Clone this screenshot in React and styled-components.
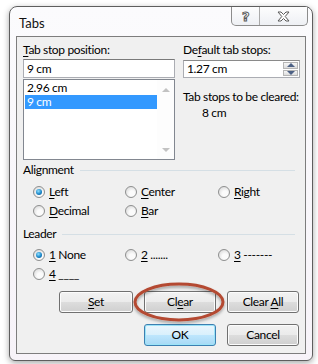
import React from "react";
import styled, { createGlobalStyle } from "styled-components";

const GlobalStyle = createGlobalStyle`
  body {
    margin: 0;
    background: #ffffff;
    font-family: "Lato", "Noto Sans", sans-serif;
    font-size: 12px;
    letter-spacing: -0.35px;
    color: #000;
  }
`;

const Page = styled.div`
  width: 318px;
  height: 364px;
  padding: 6px 0 0 9px;
  box-sizing: border-box;
`;

const Window = styled.div`
  position: relative;
  width: 304px;
  height: 355px;
  box-sizing: border-box;
  border: 1px solid #5e5e5e;
  border-radius: 8px 8px 6px 6px;
  background: linear-gradient(#fbfbfd, #f7f3f9);
  box-shadow: 0 2px 6px rgba(0, 0, 0, 0.35);
  padding: 0 6px 6px 6px;
  display: flex;
  flex-direction: column;
`;

const TitleBar = styled.div`
  height: 29px;
  display: flex;
  align-items: flex-start;
`;

const Title = styled.div`
  font-size: 13px;
  letter-spacing: 0;
  padding: 8px 0 0 3px;
  color: #111;
`;

const CaptionButtons = styled.div`
  margin-left: auto;
  margin-right: -2px;
  display: flex;
  height: 18px;
  border: 1px solid #8c8c8c;
  border-top: none;
  border-radius: 0 0 5px 5px;
  background: linear-gradient(#fdfdfd, #eef0f4);
`;

const CaptionButton = styled.div`
  width: ${(p) => p.$w}px;
  display: flex;
  align-items: center;
  justify-content: center;
  border-left: ${(p) => (p.$divider ? "1px solid #a9a9a9" : "none")};
  font-family: "DejaVu Sans", sans-serif;
  font-size: 13px;
  font-weight: bold;
  color: #ffffff;
  -webkit-text-stroke: 1px #5a5a5a;
`;

const Panel = styled.div`
  position: relative;
  flex: 1;
  border: 1px solid #7d7d7d;
  background: #f0f0f0;
  padding: 5px 5px 0 6px;
  display: flex;
  flex-direction: column;
`;

const TopGrid = styled.div`
  display: grid;
  grid-template-columns: 152px 117px;
  column-gap: 8px;
`;

const Column = styled.div`
  display: flex;
  flex-direction: column;
`;

const Label = styled.div`
  height: 17px;
  line-height: 16px;
  margin-top: ${(p) => p.$mt || 0}px;
  padding-left: ${(p) => p.$indent || 0}px;
  white-space: nowrap;
`;

const Key = styled.span`
  text-decoration: underline;
  text-underline-offset: 2px;
`;

const TextBox = styled.div`
  height: 19px;
  box-sizing: border-box;
  border: 1px solid #abadb3;
  border-top-color: #7a7a7a;
  background: #fff;
  padding-left: 3px;
  line-height: 17px;
`;

const ListBox = styled.div`
  margin-top: 1px;
  height: 81px;
  box-sizing: border-box;
  border: 1px solid #828790;
  background: #fff;
  display: flex;
`;

const ListItems = styled.div`
  flex: 1;
  padding: 1px 0 0 1px;
`;

const ListItem = styled.div`
  height: 14px;
  line-height: 14px;
  padding-left: 2px;
  background: ${(p) => (p.$selected ? "#3399ff" : "transparent")};
  color: ${(p) => (p.$selected ? "#fff" : "#000")};
`;

const ScrollTrack = styled.div`
  width: 17px;
  display: flex;
  flex-direction: column;
  justify-content: space-between;
  align-items: center;
  padding: 8px 0 7px;
  background: #fdfdfd;
`;

const Arrow = styled.div`
  width: 0;
  height: 0;
  border-left: 4px solid transparent;
  border-right: 4px solid transparent;
  ${(p) =>
    p.$up
      ? `border-bottom: 4px solid ${p.$color || "#c2c2c2"};`
      : `border-top: 4px solid ${p.$color || "#c2c2c2"};`}
`;

const Spinner = styled.div`
  margin-top: 1px;
  height: 18px;
  box-sizing: border-box;
  border: 1px solid #abadb3;
  border-top-color: #8a8a8a;
  background: #fff;
  display: flex;
`;

const SpinText = styled.div`
  flex: 1;
  padding-left: 3px;
  line-height: 16px;
`;

const SpinButtons = styled.div`
  width: 15px;
  display: flex;
  flex-direction: column;
  gap: 1px;
  padding: 1px;
`;

const SpinButton = styled.div`
  flex: 1;
  border: 1px solid #b5b5b5;
  background: linear-gradient(#f6f6f6, #dcdcdc);
  display: flex;
  align-items: center;
  justify-content: center;
`;

const SectionHeader = styled.div`
  margin-top: ${(p) => p.$mt}px;
  height: 16px;
  display: flex;
  align-items: center;
  line-height: 16px;
`;

const SectionLine = styled.div`
  flex: 1;
  height: 1px;
  margin: 1px 5px 0 6px;
  background: #d5dfe5;
`;

const RadioRow = styled.div`
  margin-top: ${(p) => p.$mt || 0}px;
  height: 19px;
  padding-left: 10px;
  display: grid;
  grid-template-columns: 92px 93px 1fr;
  align-items: center;
`;

const RadioOption = styled.div`
  display: flex;
  align-items: center;
  gap: 4px;
  white-space: nowrap;
`;

const RadioCircle = styled.div`
  width: 12px;
  height: 12px;
  box-sizing: border-box;
  border-radius: 50%;
  border: 1px solid #8e8f8f;
  background: radial-gradient(circle at 60% 65%, #fbfbfb 30%, #d0d0d0 100%);
  display: flex;
  align-items: center;
  justify-content: center;
  &::after {
    content: "";
    display: ${(p) => (p.$checked ? "block" : "none")};
    width: 6px;
    height: 6px;
    border-radius: 50%;
    background: radial-gradient(circle at 40% 35%, #8fe0ff 0%, #1b87c9 55%, #0a4f86 100%);
  }
`;

const ButtonRow = styled.div`
  margin-top: ${(p) => p.$mt}px;
  display: flex;
  justify-content: flex-end;
  gap: 11px;
  padding-right: 1px;
`;

const Button = styled.div`
  width: ${(p) => p.$w}px;
  height: 22px;
  box-sizing: border-box;
  border: 1px solid ${(p) => (p.$default ? "#3c7fb1" : "#707070")};
  border-radius: 3px;
  background: ${(p) =>
    p.$default
      ? "linear-gradient(#eaf6fd 0%, #d9f0fc 50%, #bee6fd 51%, #a7d9f5 100%)"
      : "linear-gradient(#f2f2f2 0%, #ebebeb 50%, #dddddd 51%, #cfcfcf 100%)"};
  box-shadow: inset 0 0 0 1px ${(p) => (p.$default ? "#9ce4f8" : "#fcfcfc")};
  display: flex;
  align-items: center;
  justify-content: center;
  line-height: 20px;
  white-space: pre;
`;

const Highlight = styled.svg`
  position: absolute;
  left: 116px;
  top: 245px;
  overflow: visible;
  pointer-events: none;
`;

const Radio = ({ checked, children }) => (
  <RadioOption>
    <RadioCircle $checked={checked} />
    <span>{children}</span>
  </RadioOption>
);

const App = () => {
  return (
    <>
      <GlobalStyle />
      <Page>
        <Window>
          <TitleBar>
            <Title>Tabs</Title>
            <CaptionButtons>
              <CaptionButton $w={27}>?</CaptionButton>
              <CaptionButton $w={47} $divider>
                <svg width="13" height="11" viewBox="0 0 13 11">
                  <path
                    d="M1 1 L4 1 L6.5 3.5 L9 1 L12 1 L8.2 5.5 L12 10 L9 10 L6.5 7.5 L4 10 L1 10 L4.8 5.5 Z"
                    fill="#fff"
                    stroke="#5a5a5a"
                    strokeWidth="1"
                    strokeLinejoin="round"
                  />
                </svg>
              </CaptionButton>
            </CaptionButtons>
          </TitleBar>
          <Panel>
            <TopGrid>
              <Column>
                <Label>
                  <Key>T</Key>ab stop position:
                </Label>
                <TextBox>9 cm</TextBox>
                <ListBox>
                  <ListItems>
                    <ListItem>2.96 cm</ListItem>
                    <ListItem $selected>9 cm</ListItem>
                  </ListItems>
                  <ScrollTrack>
                    <Arrow $up />
                    <Arrow />
                  </ScrollTrack>
                </ListBox>
              </Column>
              <Column>
                <Label>
                  De<Key>f</Key>ault tab stops:
                </Label>
                <Spinner>
                  <SpinText>1.27 cm</SpinText>
                  <SpinButtons>
                    <SpinButton>
                      <Arrow $up $color="#4d6185" />
                    </SpinButton>
                    <SpinButton>
                      <Arrow $color="#4d6185" />
                    </SpinButton>
                  </SpinButtons>
                </Spinner>
                <Label $mt={11}>Tab stops to be cleared:</Label>
                <Label $mt={-1} $indent={19}>
                  8 cm
                </Label>
              </Column>
            </TopGrid>

            <SectionHeader $mt={2}>
              Alignment
              <SectionLine />
            </SectionHeader>
            <RadioRow $mt={4}>
              <Radio checked>
                <Key>L</Key>eft
              </Radio>
              <Radio>
                <Key>C</Key>enter
              </Radio>
              <Radio>
                <Key>R</Key>ight
              </Radio>
            </RadioRow>
            <RadioRow>
              <Radio>
                <Key>D</Key>ecimal
              </Radio>
              <Radio>
                <Key>B</Key>ar
              </Radio>
            </RadioRow>

            <SectionHeader $mt={6}>
              Leader
              <SectionLine />
            </SectionHeader>
            <RadioRow $mt={3}>
              <Radio checked>
                <Key>1</Key> None
              </Radio>
              <Radio>
                <Key>2</Key> .......
              </Radio>
              <Radio>
                <Key>3</Key> -------
              </Radio>
            </RadioRow>
            <RadioRow>
              <Radio>
                <Key>4</Key> ____
              </Radio>
            </RadioRow>

            <ButtonRow $mt={8}>
              <Button $w={74}>
                <span>
                  <Key>S</Key>et
                </span>
              </Button>
              <Button $w={72}>
                <span>
                  Cl<Key>e</Key>ar
                </span>
              </Button>
              <Button $w={72}>
                <span>
                  Clear <Key>A</Key>ll
                </span>
              </Button>
            </ButtonRow>
            <ButtonRow $mt={11}>
              <Button $w={72} $default>
                OK
              </Button>
              <Button $w={72}>Cancel</Button>
            </ButtonRow>

            <Highlight width="92" height="40">
              <defs>
                <filter id="ringShadow" x="-20%" y="-30%" width="140%" height="170%">
                  <feDropShadow dx="0" dy="2" stdDeviation="1.5" floodColor="#000" floodOpacity="0.35" />
                </filter>
              </defs>
              <ellipse
                cx="46"
                cy="20"
                rx="44"
                ry="18"
                fill="none"
                stroke="#b44a31"
                strokeWidth="3"
                filter="url(#ringShadow)"
              />
            </Highlight>
          </Panel>
        </Window>
      </Page>
    </>
  );
};

export default App;
